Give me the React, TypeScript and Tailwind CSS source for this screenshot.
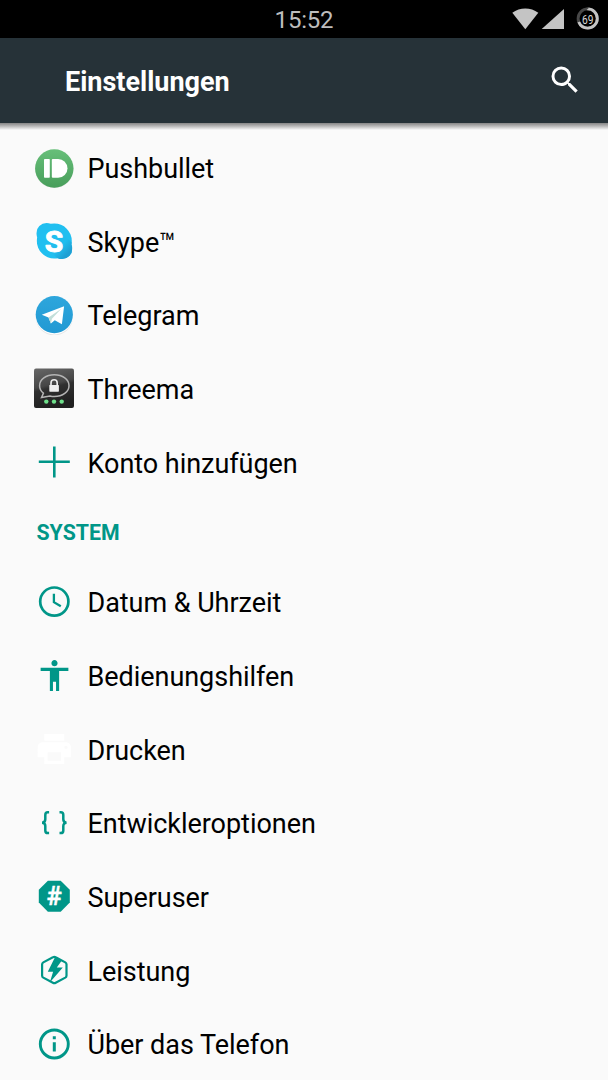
import React from 'react'

const TEAL = '#009688'

function PushbulletIcon() {
  return (
    <svg className="h-10 w-10" viewBox="-0.3 -0.4 40 40">
      <defs>
        <linearGradient id="pb" x1="0" y1="0" x2="0" y2="1">
          <stop offset="0" stopColor="#67bf79" />
          <stop offset="1" stopColor="#489e5b" />
        </linearGradient>
      </defs>
      <circle cx="20" cy="20.6" r="19" fill="#d5dcd6" />
      <circle cx="20" cy="20.1" r="19.2" fill="url(#pb)" />
      <rect x="9.700" y="10.600" width="5.800" height="18.800" rx="0.800" fill="#fff" />
      <path d="M18.500 10.600h5.300a9.400 9.400 0 0 1 0 18.800h-5.300a1 1 0 0 1-1-1V11.600a1 1 0 0 1 1-1z" fill="#fff" />
    </svg>
  )
}

function SkypeIcon() {
  return (
    <svg className="h-10 w-10" viewBox="-0.3 0 40 40">
      <defs>
        <linearGradient id="sk" x1="0" y1="0" x2="1" y2="1">
          <stop offset="0.5" stopColor="#20bdee" />
          <stop offset="0.75" stopColor="#1f9fd3" />
        </linearGradient>
        <clipPath id="skClip">
          <circle cx="20" cy="20" r="17.500" />
          <circle cx="12.300" cy="12.300" r="10.300" />
          <circle cx="27.700" cy="27.700" r="10.300" />
        </clipPath>
      </defs>
      <g clipPath="url(#skClip)">
        <rect width="40" height="40" fill="#20bff0" />
        <path d="M27 11 40 24v16H26L13 28z" fill="url(#sk)" />
      </g>
      <text
        x="19.800"
        y="31"
        textAnchor="middle"
        fontFamily="Roboto, sans-serif"
        fontWeight="700"
        fontSize="30"
        fill="#fff"
        stroke="#fff"
        strokeWidth="0.900"
        strokeLinejoin="round"
      >
        S
      </text>
    </svg>
  )
}

function TelegramIcon() {
  return (
    <svg className="h-10 w-10" viewBox="-0.3 0 40 40">
      <defs>
        <linearGradient id="tg" x1="0" y1="0" x2="0" y2="1">
          <stop offset="0" stopColor="#2ea6dc" />
          <stop offset="1" stopColor="#2199d3" />
        </linearGradient>
      </defs>
      <circle cx="20" cy="21.800" r="18.600" fill="#e6e6e6" />
      <circle cx="20" cy="20.900" r="18.600" fill="#fff" />
      <circle cx="20" cy="19.600" r="18.600" fill="url(#tg)" />
      <path d="M7.500 19.800 29.800 11.300 27.600 29.200 20.500 25.200 16.600 28.600 14.200 22.400z" fill="#fff" />
      <path d="M14.200 22.400 27 13.800 17.600 23.800 16.600 28.600z" fill="#c3dfd9" />
    </svg>
  )
}

function ThreemaIcon() {
  return (
    <svg className="h-10 w-10" viewBox="0 -0.4 40 40">
      <defs>
        <linearGradient id="th" x1="0" y1="0" x2="0.25" y2="1">
          <stop offset="0" stopColor="#686868" />
          <stop offset="0.48" stopColor="#464646" />
          <stop offset="0.56" stopColor="#303030" />
          <stop offset="1" stopColor="#202020" />
        </linearGradient>
      </defs>
      <rect x="0" y="0" width="40" height="39.600" rx="2" fill="url(#th)" />
      <path
        d="M9.400 24.800C6.900 22.800 5.600 20.200 5.600 17.300 5.600 11.200 12 6.400 20.300 6.400S35 11.200 35 17.300 28.600 28.200 20.300 28.200c-1.600 0-3-.2-4.400-.6L7.500 29.200z"
        fill="none"
        stroke="#b4b4b4"
        strokeWidth="1.500"
      />
      <rect x="15.300" y="16.500" width="9.600" height="6.800" rx="0.600" fill="#eee" />
      <path d="M17 17v-2.500a3.100 3.100 0 0 1 6.200 0V17" fill="none" stroke="#eee" strokeWidth="1.600" />
      <circle cx="12.300" cy="33.200" r="2.200" fill="#6fe08b" />
      <circle cx="20" cy="33.200" r="2.200" fill="#6fe08b" />
      <circle cx="27.700" cy="33.200" r="2.200" fill="#6fe08b" />
    </svg>
  )
}

function PlusIcon() {
  return (
    <svg className="h-10 w-10" viewBox="-0.3 0 40 40" fill="none" stroke={TEAL} strokeWidth="2.600">
      <path d="M20 4.500v31M4.500 19.700h31" />
    </svg>
  )
}

function ClockIcon() {
  return (
    <svg className="h-10 w-10" viewBox="-0.3 0 40 40" fill="none" stroke={TEAL}>
      <circle cx="20" cy="19.600" r="14.100" strokeWidth="2.700" />
      <path d="M19.600 11.800v8.400l6.900 4.100" strokeWidth="2.300" />
    </svg>
  )
}

function AccessibilityIcon() {
  return (
    <svg className="h-[37px] w-[37px]" viewBox="0 0 24 24" fill={TEAL}>
      <path d="M12 2c1.100 0 2 .9 2 2s-.9 2-2 2-2-.9-2-2 .9-2 2-2zm9 7h-6v13h-2v-6h-2v6H9V9H3V7h18v2z" />
    </svg>
  )
}

function PrintIcon() {
  return (
    <svg className="h-10 w-10" viewBox="-0.2 0 24 24" fill="#fff">
      <path d="M19 8H5c-1.660 0-3 1.340-3 3v6h4v4h12v-4h4v-6c0-1.660-1.340-3-3-3zm-3 11H8v-5h8v5zm3-7c-.55 0-1-.45-1-1s.45-1 1-1 1 .45 1 1-.45 1-1 1zm-1-9H6v4h12V3z" />
    </svg>
  )
}

function BracesIcon() {
  return (
    <svg className="h-10 w-10" viewBox="-0.3 0.5 40 40" fill="none" stroke={TEAL} strokeWidth="2.500">
      <path d="M14.800 9.800h-1.300c-1.700 0-2.500 1-2.500 2.700v4.300c0 2-1.200 3.400-3.300 3.400 2.100 0 3.300 1.400 3.300 3.400v4.300c0 1.700.8 2.700 2.500 2.700h1.300" />
      <path d="M25.200 9.800h1.300c1.700 0 2.500 1 2.500 2.700v4.300c0 2 1.200 3.400 3.300 3.400-2.100 0-3.300 1.400-3.300 3.400v4.300c0 1.700-.8 2.700-2.500 2.700h-1.300" />
    </svg>
  )
}

function SuperuserIcon() {
  return (
    <svg className="h-10 w-10" viewBox="-0.3 -0.2 40 40">
      <path d="M13.600 4.500h12.800l9.100 9.100v12.800l-9.100 9.100H13.600l-9.100-9.100V13.600z" fill={TEAL} />
      <text
        x="19.900"
        y="28.900"
        textAnchor="middle"
        fontFamily="Roboto, sans-serif"
        fontWeight="700"
        fontSize="25.500"
        fill="#fff"
        stroke="#fff"
        strokeWidth="0.300"
      >
        #
      </text>
    </svg>
  )
}

function BoltIcon() {
  return (
    <svg className="h-10 w-10" viewBox="-0.3 0 40 40">
      <path
        d="M18.600 7.200a2.800 2.800 0 0 1 2.800 0l9.600 5.200a2.400 2.400 0 0 1 1.200 2v11.200a2.400 2.400 0 0 1-1.200 2l-9.600 5.200a2.800 2.800 0 0 1-2.800 0L9 27.600a2.400 2.400 0 0 1-1.200-2V14.400a2.400 2.400 0 0 1 1.200-2z"
        fill="none"
        stroke={TEAL}
        strokeWidth="2.200"
      />
      <path d="M20.800 7 13.500 21.800h5.300L15.500 32.500 28.500 17.500h-6l5.200-7.300z" fill={TEAL} />
    </svg>
  )
}

function InfoIcon() {
  return (
    <svg className="h-10 w-10" viewBox="-0.3 0 40 40">
      <circle cx="20" cy="20" r="14" fill="none" stroke={TEAL} strokeWidth="2.900" />
      <path d="M18.500 12.300h3v3h-3zM18.500 18.200h3v9.400h-3z" fill={TEAL} />
    </svg>
  )
}

const accounts = [
  { label: 'Pushbullet', icon: <PushbulletIcon /> },
  { label: 'Skype™', icon: <SkypeIcon /> },
  { label: 'Telegram', icon: <TelegramIcon /> },
  { label: 'Threema', icon: <ThreemaIcon /> },
  { label: 'Konto hinzufügen', icon: <PlusIcon /> },
]

const system = [
  { label: 'Datum & Uhrzeit', icon: <ClockIcon /> },
  { label: 'Bedienungshilfen', icon: <AccessibilityIcon /> },
  { label: 'Drucken', icon: <PrintIcon /> },
  { label: 'Entwickleroptionen', icon: <BracesIcon /> },
  { label: 'Superuser', icon: <SuperuserIcon /> },
  { label: 'Leistung', icon: <BoltIcon /> },
  { label: 'Über das Telefon', icon: <InfoIcon /> },
]

function Row({ label, icon }: { label: string; icon: React.ReactNode }) {
  return (
    <li className="flex h-[73.67px] shrink-0 items-center pl-[34.300px]">
      <span className="flex h-10 w-10 shrink-0 items-center justify-center">{icon}</span>
      <span className="ml-[13.200px] pt-[3px] text-[27px] leading-8 tracking-[-0.04px] whitespace-nowrap text-black">{label}</span>
    </li>
  )
}

function StatusBar() {
  return (
    <div className="flex h-[38px] shrink-0 items-center bg-black">
      <span className="w-[608px] pt-px text-center text-[24px] leading-7 tracking-[-0.2px] text-[#bdbdbd]">15:52</span>
      <svg className="-ml-[100px] h-[38px] w-[100px] shrink-0" viewBox="508 0 100 38">
        <path d="M512.300 12.800c7.500-5.700 18.500-5.700 26 0L525.300 29.300z" fill="#c4c4c4" />
        <path d="M564 9v20h-22.300z" fill="#c4c4c4" />
        <circle cx="587.700" cy="18.500" r="9.600" fill="none" stroke="#484848" strokeWidth="2.900" />
        <circle
          cx="587.700"
          cy="18.500"
          r="9.600"
          fill="none"
          stroke="#c4c4c4"
          strokeWidth="2.900"
          pathLength="100"
          strokeDasharray="69 31"
          transform="rotate(-90 587.700 18.500)"
        />
        <text
          x="582"
          y="23.500"
          textLength="11.500"
          lengthAdjust="spacingAndGlyphs"
          fontFamily="Roboto, sans-serif"
          fontSize="13.500"
          fill="#d8d8d8"
        >
          69
        </text>
      </svg>
    </div>
  )
}

export default function App() {
  return (
    <div className="flex h-[1080px] w-[608px] flex-col overflow-hidden bg-[#fafafa] font-[Roboto,sans-serif]">
      <StatusBar />
      <header className="flex h-[84.500px] shrink-0 items-center justify-between bg-[#263238] pr-[25px] pl-[65px]">
        <h1 className="pt-[3px] text-[27px] leading-8 font-bold text-white">Einstellungen</h1>
        <svg className="-mt-px h-9 w-9" viewBox="0 0 24 24" fill="#fff">
          <path d="M15.500 14h-.79l-.28-.27A6.471 6.471 0 0 0 16 9.500 6.500 6.500 0 1 0 9.500 16c1.610 0 3.090-.59 4.230-1.570l.27.28v.79l5 4.990L20.490 19l-4.990-5zm-6 0C7.010 14 5 11.990 5 9.500S7.010 5 9.500 5 14 7.010 14 9.500 11.990 14 9.500 14z" />
        </svg>
      </header>
      <div className="h-[7px] shrink-0 bg-linear-to-b from-[#858585] to-[#fafafa]" />
      <main className="pt-[1.200px]">
        <ul>
          {accounts.map((item) => (
            <Row key={item.label} {...item} />
          ))}
        </ul>
        <h2 className="flex h-[66px] items-center pt-[2px] pl-[36.500px] text-[21.300px] leading-none font-bold text-[#009688]">SYSTEM</h2>
        <ul>
          {system.map((item) => (
            <Row key={item.label} {...item} />
          ))}
        </ul>
      </main>
    </div>
  )
}
